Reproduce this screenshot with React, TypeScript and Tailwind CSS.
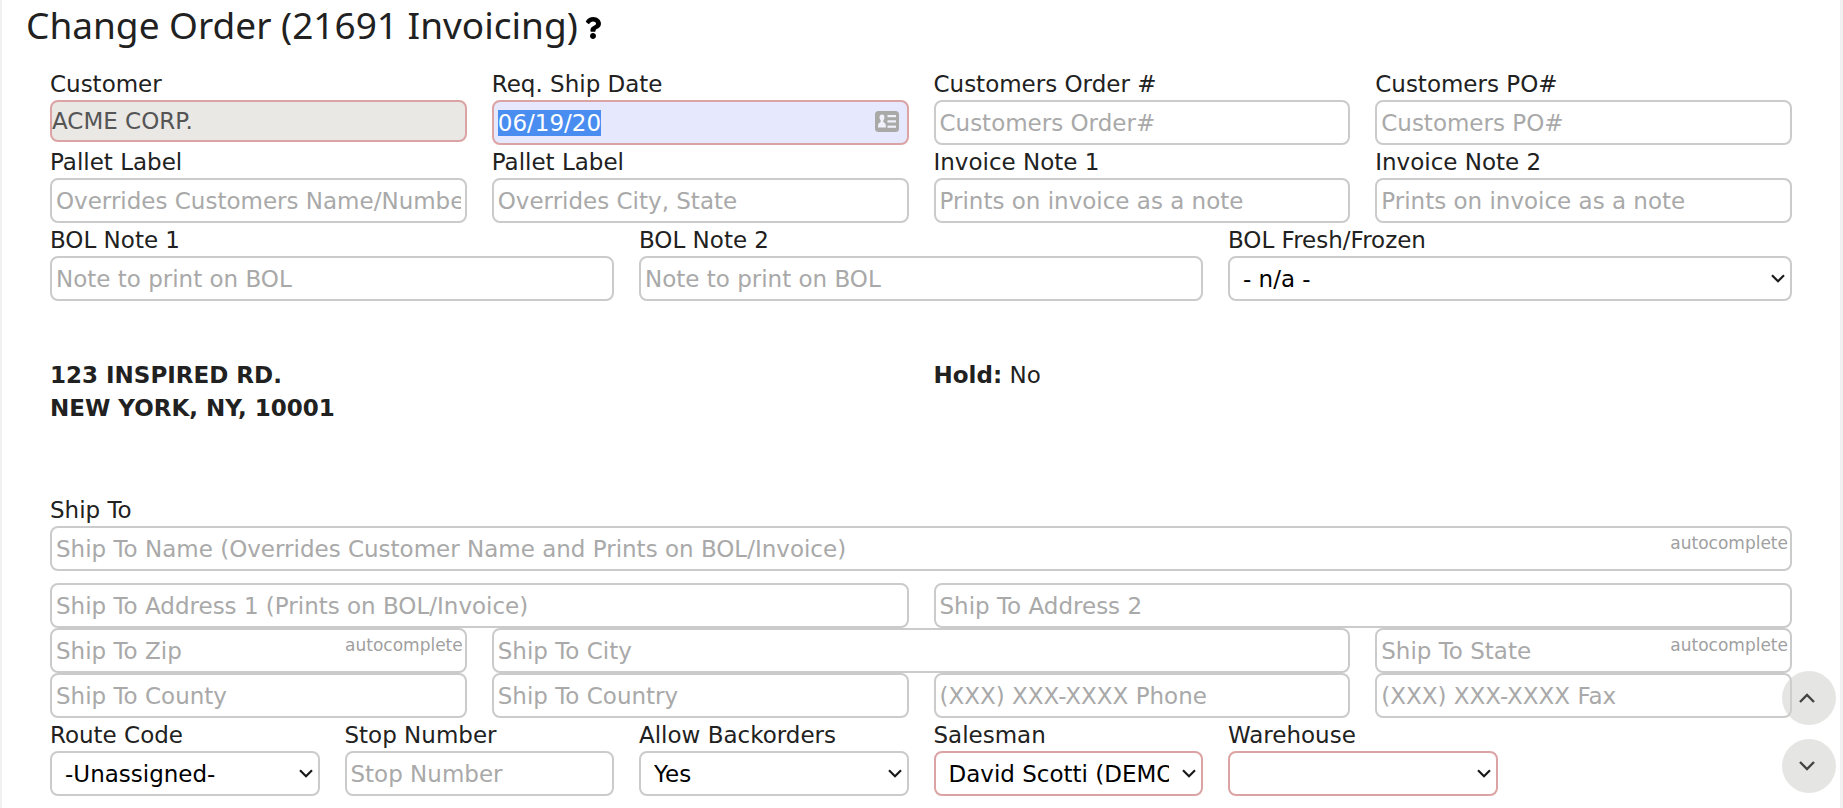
import { useEffect, useId, useRef } from "react";
import type { ReactNode } from "react";
import { FaQuestion } from "react-icons/fa";

const cx = (...names: (string | false | undefined)[]) => names.filter(Boolean).join(" ");

const spans = {
  2: "col-span-2",
  3: "col-span-3",
  4: "col-span-4",
  6: "col-span-6",
  12: "col-span-12",
};

type Span = keyof typeof spans;

const box = "block w-full rounded-lg border-2 text-[23px] leading-7 outline-none";

function Label({ id, children }: { id: string; children: ReactNode }) {
  return (
    <label htmlFor={id} className="block pt-0.5 text-[23px] leading-[31px] whitespace-nowrap">
      {children}
    </label>
  );
}

function TextField({
  label,
  hint,
  span,
  autocomplete,
}: {
  label?: string;
  hint: string;
  span: Span;
  autocomplete?: boolean;
}) {
  const id = useId();
  return (
    <div className={spans[span]}>
      {label && <Label id={id}>{label}</Label>}
      <div className="relative">
        <input
          id={id}
          type="text"
          aria-label={label ? undefined : hint}
          placeholder={hint}
          className={cx(box, "h-[45px] border-[#cbcbcb] bg-white px-1 placeholder:text-[#a9a9a9]")}
        />
        {autocomplete && (
          <span className="pointer-events-none absolute top-[7px] right-1 text-[17px] leading-5 text-[#a0a0a0]">
            autocomplete
          </span>
        )}
      </div>
    </div>
  );
}

function SelectField({
  label,
  options,
  span,
  required,
}: {
  label: string;
  options: string[];
  span: Span;
  required?: boolean;
}) {
  const id = useId();
  return (
    <div className={spans[span]}>
      <Label id={id}>{label}</Label>
      <div className="relative">
        <select
          id={id}
          className={cx(
            box,
            "h-[45px] appearance-none bg-white pr-8 pl-[13px] text-black",
            required ? "border-[#dba3a3]" : "border-[#cbcbcb]",
          )}
        >
          {options.map((option) => (
            <option key={option}>{option}</option>
          ))}
        </select>
        <svg
          viewBox="0 0 14 9"
          className="pointer-events-none absolute top-[18px] right-[7px] h-[9px] w-3.5"
          fill="none"
          stroke="#1a1a1a"
          strokeWidth="2.2"
          aria-hidden="true"
        >
          <path d="M1 1.2 7 7.2 13 1.2" />
        </svg>
      </div>
    </div>
  );
}

function CustomerField() {
  const id = useId();
  return (
    <div className="col-span-3">
      <Label id={id}>Customer</Label>
      <input
        id={id}
        type="text"
        readOnly
        defaultValue="ACME CORP."
        className={cx(box, "h-[42px] border-[#dba3a3] bg-[#e9e8e5] text-[#555555]")}
      />
    </div>
  );
}

function ShipDateField() {
  const id = useId();
  const input = useRef<HTMLInputElement>(null);

  useEffect(() => {
    input.current?.focus();
    input.current?.select();
  }, []);

  return (
    <div className="col-span-3">
      <Label id={id}>Req. Ship Date</Label>
      <div className="relative">
        <input
          ref={input}
          id={id}
          type="text"
          defaultValue="06/19/20"
          className={cx(
            box,
            "h-[45px] border-[#dba3a3] bg-[#e6e8fd] pr-12 pl-1 selection:bg-[#4a8df0] selection:text-white",
          )}
        />
        <svg
          viewBox="0 0 24 21"
          className="pointer-events-none absolute top-[11px] right-2.5 h-[21px] w-6"
          aria-hidden="true"
        >
          <rect width="24" height="21" rx="3.5" fill="#a9aaa8" />
          <g fill="#f1f1fb">
            <path d="M7 3.6c1.5 0 2.5 1.1 2.5 2.7 0 1.2-.5 2.4-1.2 3.1v1.7c1.6.8 2.6 2 2.6 4v1.3H3v-1.3c0-2 1-3.2 2.7-4V9.4C5 8.7 4.5 7.5 4.5 6.3 4.5 4.7 5.5 3.6 7 3.6Z" />
            <rect x="12.5" y="4" width="8.5" height="2.2" />
            <rect x="12.5" y="9.3" width="8.5" height="2.2" />
            <rect x="12.5" y="14.6" width="8.5" height="2.2" />
          </g>
        </svg>
      </div>
    </div>
  );
}

function ScrollButton({ label, path }: { label: string; path: string }) {
  return (
    <button
      type="button"
      aria-label={label}
      className="flex size-[54px] items-center justify-center rounded-full bg-[#cfcfcc]/55 text-[#444444]"
    >
      <svg
        viewBox="0 0 16 10"
        className="mr-1 h-2.5 w-4"
        fill="none"
        stroke="currentColor"
        strokeWidth="2.4"
        aria-hidden="true"
      >
        <path d={path} />
      </svg>
    </button>
  );
}

export default function App() {
  return (
    <div className="min-h-screen overflow-x-hidden border-r-[3px] border-l-2 border-[#f1f1f1] bg-white pb-3 font-['DejaVu_Sans',sans-serif] text-[#212121]">
      <h1 className="flex items-center gap-1 pl-6 font-['Noto_Sans',sans-serif] text-[37px] leading-[50px] font-normal">
        Change Order (21691 Invoicing)
        <button type="button" aria-label="Help" className="mt-1.5">
          <FaQuestion className="size-[22px] text-black" />
        </button>
      </h1>

      <form className="mt-[17px] mr-12 ml-12">
        <div className="grid grid-cols-12 gap-x-[25px]">
          <CustomerField />
          <ShipDateField />
          <TextField span={3} label="Customers Order #" hint="Customers Order#" />
          <TextField span={3} label="Customers PO#" hint="Customers PO#" />
          <TextField span={3} label="Pallet Label" hint="Overrides Customers Name/Number" />
          <TextField span={3} label="Pallet Label" hint="Overrides City, State" />
          <TextField span={3} label="Invoice Note 1" hint="Prints on invoice as a note" />
          <TextField span={3} label="Invoice Note 2" hint="Prints on invoice as a note" />
          <TextField span={4} label="BOL Note 1" hint="Note to print on BOL" />
          <TextField span={4} label="BOL Note 2" hint="Note to print on BOL" />
          <SelectField span={4} label="BOL Fresh/Frozen" options={["- n/a -", "Fresh", "Frozen"]} />
        </div>

        <div className="mt-[58px] grid grid-cols-2 gap-x-[25px] text-[23px] leading-[33px]">
          <address className="font-bold not-italic">
            123 INSPIRED RD.
            <br />
            NEW YORK, NY, 10001
          </address>
          <p>
            <b>Hold:</b> No
          </p>
        </div>

        <div className="mt-[68px] grid grid-cols-12 gap-x-[25px]">
          <TextField
            span={12}
            label="Ship To"
            hint="Ship To Name (Overrides Customer Name and Prints on BOL/Invoice)"
            autocomplete
          />
        </div>

        <div className="mt-3 grid grid-cols-12 gap-x-[25px]">
          <TextField span={6} hint="Ship To Address 1 (Prints on BOL/Invoice)" />
          <TextField span={6} hint="Ship To Address 2" />
          <TextField span={3} hint="Ship To Zip" autocomplete />
          <TextField span={6} hint="Ship To City" />
          <TextField span={3} hint="Ship To State" autocomplete />
          <TextField span={3} hint="Ship To County" />
          <TextField span={3} hint="Ship To Country" />
          <TextField span={3} hint="(XXX) XXX-XXXX Phone" />
          <TextField span={3} hint="(XXX) XXX-XXXX Fax" />
          <SelectField span={2} label="Route Code" options={["-Unassigned-"]} />
          <TextField span={2} label="Stop Number" hint="Stop Number" />
          <SelectField span={2} label="Allow Backorders" options={["Yes", "No"]} />
          <SelectField span={2} label="Salesman" options={["David Scotti (DEMO)"]} required />
          <SelectField span={2} label="Warehouse" options={[""]} required />
        </div>
      </form>

      <nav aria-label="Page scroll" className="fixed right-[7px] bottom-[15px] flex flex-col gap-3.5">
        <ScrollButton label="Scroll up" path="M1 9 8 2 15 9" />
        <ScrollButton label="Scroll down" path="M1 1 8 8 15 1" />
      </nav>
    </div>
  );
}
